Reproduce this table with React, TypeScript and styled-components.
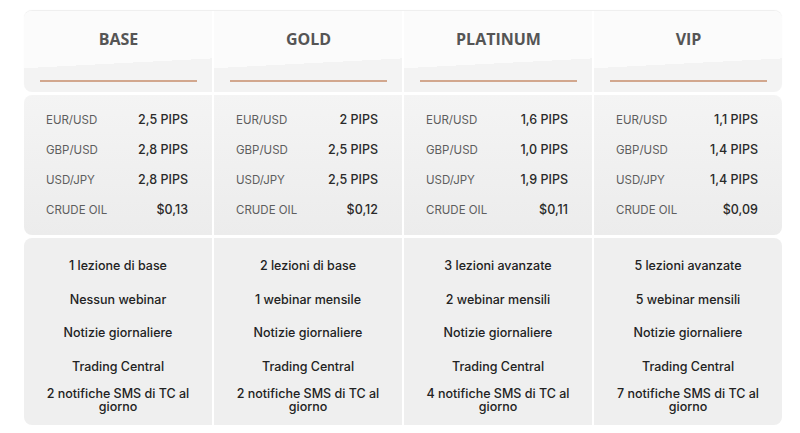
import React from "react";
import styled, { createGlobalStyle } from "styled-components";

interface Plan {
  name: string;
  spreads: { pair: string; value: string }[];
  features: string[];
}

const plans: Plan[] = [
  {
    name: "BASE",
    spreads: [
      { pair: "EUR/USD", value: "2,5 PIPS" },
      { pair: "GBP/USD", value: "2,8 PIPS" },
      { pair: "USD/JPY", value: "2,8 PIPS" },
      { pair: "CRUDE OIL", value: "$0,13" },
    ],
    features: [
      "1 lezione di base",
      "Nessun webinar",
      "Notizie giornaliere",
      "Trading Central",
      "2 notifiche SMS di TC al giorno",
    ],
  },
  {
    name: "GOLD",
    spreads: [
      { pair: "EUR/USD", value: "2 PIPS" },
      { pair: "GBP/USD", value: "2,5 PIPS" },
      { pair: "USD/JPY", value: "2,5 PIPS" },
      { pair: "CRUDE OIL", value: "$0,12" },
    ],
    features: [
      "2 lezioni di base",
      "1 webinar mensile",
      "Notizie giornaliere",
      "Trading Central",
      "2 notifiche SMS di TC al giorno",
    ],
  },
  {
    name: "PLATINUM",
    spreads: [
      { pair: "EUR/USD", value: "1,6 PIPS" },
      { pair: "GBP/USD", value: "1,0 PIPS" },
      { pair: "USD/JPY", value: "1,9 PIPS" },
      { pair: "CRUDE OIL", value: "$0,11" },
    ],
    features: [
      "3 lezioni avanzate",
      "2 webinar mensili",
      "Notizie giornaliere",
      "Trading Central",
      "4 notifiche SMS di TC al giorno",
    ],
  },
  {
    name: "VIP",
    spreads: [
      { pair: "EUR/USD", value: "1,1 PIPS" },
      { pair: "GBP/USD", value: "1,4 PIPS" },
      { pair: "USD/JPY", value: "1,4 PIPS" },
      { pair: "CRUDE OIL", value: "$0,09" },
    ],
    features: [
      "5 lezioni avanzate",
      "5 webinar mensili",
      "Notizie giornaliere",
      "Trading Central",
      "7 notifiche SMS di TC al giorno",
    ],
  },
];

const GlobalStyle = createGlobalStyle`
  body {
    margin: 0;
    background: #ffffff;
    font-family: "Inter", "Open Sans", sans-serif;
  }
`;

const Page = styled.div`
  padding: 11px 0 0 24px;
`;

const Table = styled.div`
  width: 758px;
  display: flex;
  flex-direction: column;
  gap: 3px;
`;

const Section = styled.div<{ $height: number }>`
  display: grid;
  grid-template-columns: repeat(4, 188px);
  column-gap: 2px;
  height: ${(p) => p.$height}px;
  border-radius: 8px;
  overflow: hidden;
  background: #ffffff;
`;

const HeaderSection = styled(Section)`
  box-shadow: 0 -1px 1px rgba(0, 0, 0, 0.07);
`;

const HeaderCell = styled.div`
  display: flex;
  flex-direction: column;
  align-items: stretch;
  padding: 0 15px 10px 16px;
  background: linear-gradient(177deg, #fbfbfb 63%, #f3f3f3 63%);
`;

const PlanName = styled.h3`
  margin: 0;
  flex: 1;
  display: flex;
  align-items: center;
  justify-content: center;
  padding-bottom: 13px;
  font-family: "Open Sans", sans-serif;
  font-size: 16px;
  font-weight: 700;
  color: #555555;
`;

const Underline = styled.div`
  height: 2px;
  background: #d2a78e;
`;

const SpreadCell = styled.div`
  display: flex;
  flex-direction: column;
  padding: 9px 24px 0 22px;
  background: linear-gradient(180deg, #f4f4f4, #ececec);
`;

const SpreadRow = styled.div`
  height: 30px;
  display: flex;
  align-items: center;
  justify-content: space-between;
`;

const Pair = styled.span`
  margin-top: 2px;
  font-size: 11.5px;
  color: #5e5e5e;
`;

const Value = styled.span`
  font-size: 12.5px;
  font-weight: 500;
  color: #2a2a2a;
`;

const FeatureCell = styled.div`
  display: flex;
  flex-direction: column;
  padding: 11px 12px 9px;
  background: #efefef;
`;

const Feature = styled.div`
  height: 33.5px;
  display: flex;
  align-items: center;
  justify-content: center;
  text-align: center;
  font-size: 12.5px;
  line-height: 13px;
  font-weight: 500;
  color: #222222;
`;

export default function App() {
  return (
    <Page>
      <GlobalStyle />
      <Table>
        <HeaderSection $height={81}>
          {plans.map((p) => (
            <HeaderCell key={p.name}>
              <PlanName>{p.name}</PlanName>
              <Underline />
            </HeaderCell>
          ))}
        </HeaderSection>
        <Section $height={140}>
          {plans.map((p) => (
            <SpreadCell key={p.name}>
              {p.spreads.map((s) => (
                <SpreadRow key={s.pair}>
                  <Pair>{s.pair}</Pair>
                  <Value>{s.value}</Value>
                </SpreadRow>
              ))}
            </SpreadCell>
          ))}
        </Section>
        <Section $height={187}>
          {plans.map((p) => (
            <FeatureCell key={p.name}>
              {p.features.map((f) => (
                <Feature key={f}>{f}</Feature>
              ))}
            </FeatureCell>
          ))}
        </Section>
      </Table>
    </Page>
  );
}
